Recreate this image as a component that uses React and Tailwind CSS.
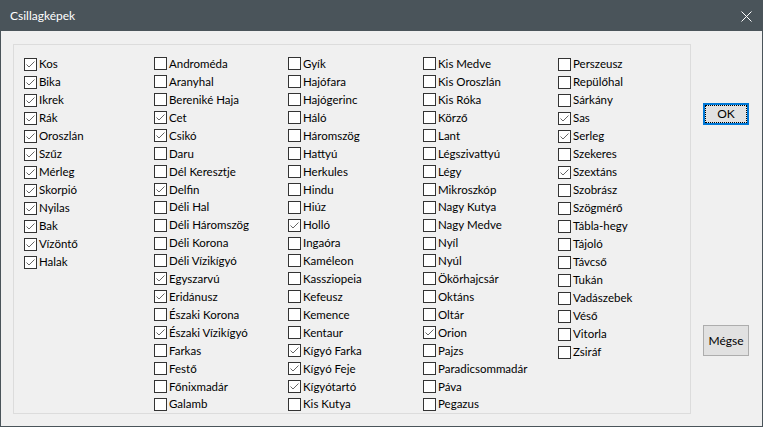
import React from "react";

const columns = [
  [
    ["Kos", true],
    ["Bika", true],
    ["Ikrek", true],
    ["Rák", true],
    ["Oroszlán", true],
    ["Szűz", true],
    ["Mérleg", true],
    ["Skorpió", true],
    ["Nyilas", true],
    ["Bak", true],
    ["Vízöntő", true],
    ["Halak", true],
  ],
  [
    ["Androméda"],
    ["Aranyhal"],
    ["Bereniké Haja"],
    ["Cet", true],
    ["Csikó", true],
    ["Daru"],
    ["Dél Keresztje"],
    ["Delfin", true],
    ["Déli Hal"],
    ["Déli Háromszög"],
    ["Déli Korona"],
    ["Déli Vízikígyó"],
    ["Egyszarvú", true],
    ["Eridánusz", true],
    ["Északi Korona"],
    ["Északi Vízikígyó", true],
    ["Farkas"],
    ["Festő"],
    ["Főnixmadár"],
    ["Galamb"],
  ],
  [
    ["Gyík"],
    ["Hajófara"],
    ["Hajógerinc"],
    ["Háló"],
    ["Háromszög"],
    ["Hattyú"],
    ["Herkules"],
    ["Hindu"],
    ["Hiúz"],
    ["Holló", true],
    ["Ingaóra"],
    ["Kaméleon"],
    ["Kassziopeia"],
    ["Kefeusz"],
    ["Kemence"],
    ["Kentaur"],
    ["Kígyó Farka", true],
    ["Kígyó Feje", true],
    ["Kígyótartó", true],
    ["Kis Kutya"],
  ],
  [
    ["Kis Medve"],
    ["Kis Oroszlán"],
    ["Kis Róka"],
    ["Körző"],
    ["Lant"],
    ["Légszivattyú"],
    ["Légy"],
    ["Mikroszkóp"],
    ["Nagy Kutya"],
    ["Nagy Medve"],
    ["Nyíl"],
    ["Nyúl"],
    ["Ökörhajcsár"],
    ["Oktáns"],
    ["Oltár"],
    ["Orion", true],
    ["Pajzs"],
    ["Paradicsommadár"],
    ["Páva"],
    ["Pegazus"],
  ],
  [
    ["Perszeusz"],
    ["Repülőhal"],
    ["Sárkány"],
    ["Sas", true],
    ["Serleg", true],
    ["Szekeres"],
    ["Szextáns", true],
    ["Szobrász"],
    ["Szögmérő"],
    ["Tábla-hegy"],
    ["Tájoló"],
    ["Távcső"],
    ["Tukán"],
    ["Vadászebek"],
    ["Véső"],
    ["Vitorla"],
    ["Zsiráf"],
  ],
];

const colWidths = ["w-[130px]", "w-[134px]", "w-[135px]", "w-[135px]", "w-[110px]"];

function Check({ label, checked }) {
  const [on, setOn] = React.useState(!!checked);
  return (
    <label className="flex items-center h-[18px] cursor-default select-none" onClick={() => setOn(!on)}>
      <span className="w-[13px] h-[13px] border border-[#333] bg-white flex items-center justify-center shrink-0">
        {on && (
          <svg width="11" height="11" viewBox="0 0 11 11">
            <path d="M1.5 5.5 L4 8 L9.5 2.5" fill="none" stroke="#666" strokeWidth="1" />
          </svg>
        )}
      </span>
      <span className="ml-[2px] text-[11.5px] leading-none text-[#000] whitespace-nowrap">{label}</span>
    </label>
  );
}

export default function App() {
  return (
    <div
      className="w-[763px] h-[427px] flex flex-col bg-[#f0f0f0] border border-[#4a545a]"
      style={{ fontFamily: "Lato, 'Liberation Sans', sans-serif" }}
    >
      <div className="h-[30px] bg-[#4a545a] flex items-center justify-between pl-[9px] pr-[10px] text-white text-[12px]">
        <span>Csillagképek</span>
        <svg width="11" height="11" viewBox="0 0 11 11">
          <path d="M0.5 0.5 L10.5 10.5 M10.5 0.5 L0.5 10.5" stroke="#fff" strokeWidth="1" />
        </svg>
      </div>

      <div className="flex pl-[12px] pt-[13px]">
        <div className="w-[678px] h-[370px] border border-[#dcdcdc] flex pl-[10px] pt-[10px]">
          {columns.map((col, i) => (
            <div key={i} className={"flex flex-col " + colWidths[i]}>
              {col.map(([label, checked]) => (
                <Check key={label} label={label} checked={checked} />
              ))}
            </div>
          ))}
        </div>

        <div className="flex flex-col ml-[12px]">
          <button className="mt-[59px] w-[46px] h-[22px] bg-[#e1e1e1] border-2 border-[#0078d7] flex items-center justify-center text-[12px] text-black">
            <span className="w-full h-full border border-dotted border-black flex items-center justify-center">OK</span>
          </button>
          <button className="mt-[200px] w-[46px] h-[31px] bg-[#e1e1e1] border border-[#adadad] flex items-center justify-center text-[12px] text-black">
            Mégse
          </button>
        </div>
      </div>
    </div>
  );
}
